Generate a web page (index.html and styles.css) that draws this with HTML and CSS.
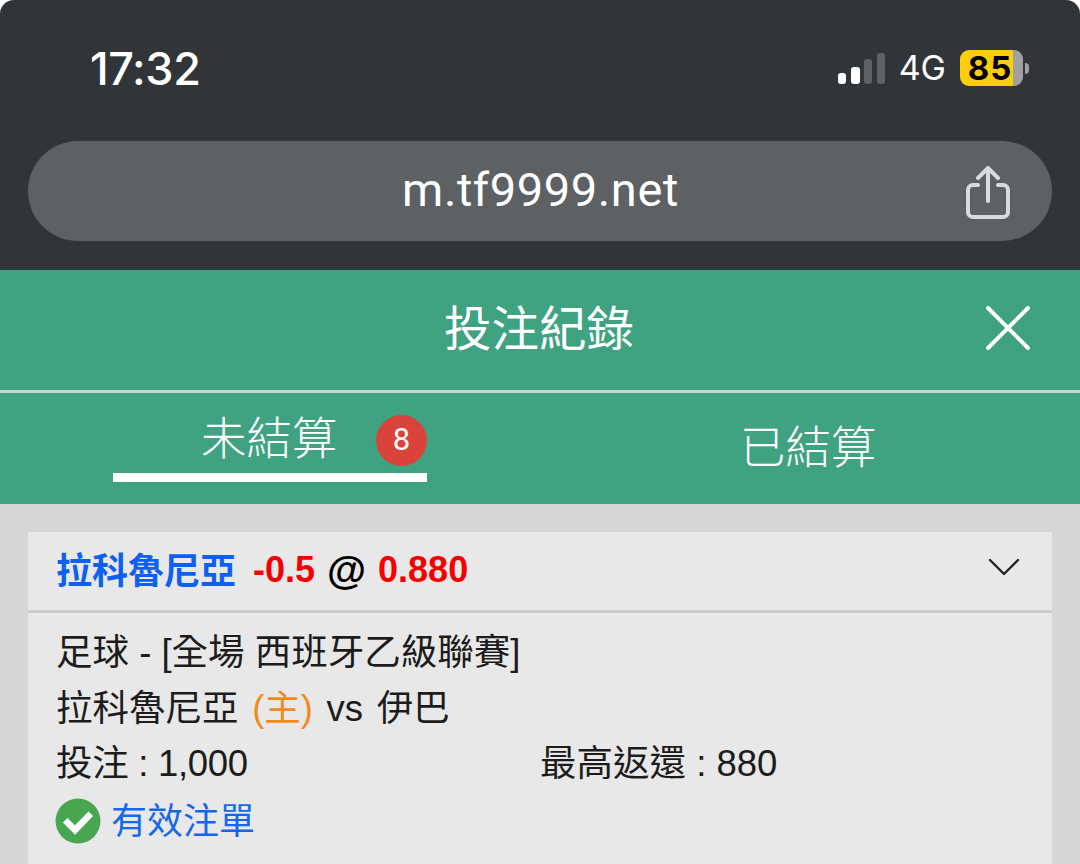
FILE: index.html
```html
<!DOCTYPE html>
<html lang="zh-Hant">
<head>
<meta charset="utf-8">
<title>投注紀錄</title>
<link rel="stylesheet" href="styles.css">
</head>
<body>
<div class="page">
  <header class="browser">
    <div class="status">
      <span class="time">17:32</span>
      <div class="indicators">
        <svg class="signal" width="47" height="31" viewBox="0 0 47 31">
          <rect x="0" y="20" width="8" height="11" rx="3" fill="#fff"/>
          <rect x="13" y="14" width="9" height="17" rx="3" fill="#fff"/>
          <rect x="26" y="6" width="8" height="25" rx="3" fill="#5f6265"/>
          <rect x="39" y="0" width="8" height="31" rx="3" fill="#5f6265"/>
        </svg>
        <span class="net">4G</span>
        <div class="battery">
          <div class="cell"><span>85</span></div>
          <i class="nub"></i>
        </div>
      </div>
    </div>
    <div class="urlbar">
      <span class="url">m.tf9999.net</span>
      <svg class="share" width="46" height="54" viewBox="0 0 46 54" fill="none" stroke="#d8dade" stroke-width="4" stroke-linecap="round" stroke-linejoin="round">
        <path d="M13 19H8a5 5 0 0 0-5 5v22a5 5 0 0 0 5 5h30a5 5 0 0 0 5-5V24a5 5 0 0 0-5-5h-5"/>
        <path d="M23 35V3"/>
        <path d="M13 12 23 2l10 10"/>
      </svg>
    </div>
  </header>
  <section class="title">
    <h1>投注紀錄</h1>
    <svg class="close" width="44" height="44" viewBox="0 0 44 44" stroke="#fff" stroke-width="4" stroke-linecap="round"><path d="M2 2 42 42M42 2 2 42"/></svg>
  </section>
  <nav class="tabs">
    <div class="tab active">
      <span class="tab-label">未結算</span>
      <span class="badge">8</span>
    </div>
    <div class="tab other"><span class="tab-label">已結算</span></div>
  </nav>
  <main class="content">
    <article class="card">
      <div class="card-head">
        <div class="bet">
          <span class="team">拉科魯尼亞</span>
          <span class="odds">-0.5</span>
          <span class="at">@</span>
          <span class="odds">0.880</span>
        </div>
        <svg class="chev" width="32" height="20" viewBox="0 0 32 20" fill="none" stroke="#222" stroke-width="2.4" stroke-linecap="round" stroke-linejoin="round"><path d="M2 3 16 17 30 3"/></svg>
      </div>
      <div class="card-body">
        <div class="row">足球 - [全場 西班牙乙級聯賽]</div>
        <div class="row match">拉科魯尼亞 <span class="home">(主)</span> vs 伊巴</div>
        <div class="row split"><span class="col">投注 : 1,000</span><span class="col">最高返還 : 880</span></div>
        <div class="row valid">
          <svg width="46" height="46" viewBox="0 0 46 46"><circle cx="23" cy="23" r="22.5" fill="#47a64f"/><path d="M12.5 24.5 20 32 33.5 18" fill="none" stroke="#fff" stroke-width="6.5" stroke-linecap="square" stroke-linejoin="miter"/></svg>
          <span>有效注單</span>
        </div>
      </div>
    </article>
  </main>
</div>
</body>
</html>
```
FILE: styles.css
```css
* { box-sizing: border-box; }
html, body { margin: 0; padding: 0; background: #fff; }
body { width: 1080px; height: 864px; overflow: hidden; font-family: "Liberation Sans", "Noto Sans CJK TC", sans-serif; }
.page { width: 1080px; height: 864px; display: flex; flex-direction: column; overflow: hidden; border-radius: 14px 14px 0 0; }
.browser { height: 270px; background: #323538; border-bottom: 1px solid #23403a; padding: 0 28px; flex: none; }
.status { height: 141px; display: flex; justify-content: space-between; align-items: flex-start; padding: 0 23px 0 62px; }
.time { margin-top: 44px; font: 500 45px/50px Inter, "Liberation Sans", sans-serif; letter-spacing: -0.4px; color: #fff; }
.indicators { display: flex; align-items: center; margin-top: 50px; height: 36px; }
.signal { margin-top: 1px; }
.net { margin-left: 14px; font: 400 34px/36px Inter, "Liberation Sans", sans-serif; color: #fff; }
.battery { display: flex; align-items: center; margin-left: 14px; }
.cell { width: 63px; height: 36px; border-radius: 9px; background: linear-gradient(90deg, #fdcd0d 0 53px, #a0a0a2 53px); display: flex; align-items: center; }
.cell span { width: 53px; padding-left: 7px; text-align: center; font: 700 33px/36px Inter, "Liberation Sans", sans-serif; color: #000; letter-spacing: 1px; }
.nub { width: 4px; height: 11px; margin-left: 2px; background: #a0a0a2; border-radius: 0 5px 5px 0; }
.urlbar { height: 100px; background: #5d6164; border-radius: 50px; display: flex; align-items: center; justify-content: center; position: relative; }
.url { font: 400 47px/56px Roboto, "Liberation Sans", sans-serif; color: #fff; letter-spacing: 0.6px; margin-left: 1px; margin-top: -3px; }
.share { position: absolute; right: 41px; top: 25px; }
.title { height: 123px; background: #3fa280; border-bottom: 3px solid #c9d6d0; padding-bottom: 8px; display: flex; align-items: center; justify-content: center; position: relative; flex: none; }
.title h1 { margin: 0 0 0 -2px; font: 400 47.5px/60px "Noto Sans CJK TC", sans-serif; color: #fff; }
.close { position: absolute; right: 50px; top: 36px; }
.tabs { height: 111px; background: #3fa280; display: flex; padding-left: 113px; flex: none; }
.tab { position: relative; }
.tab-label { font: 300 45.4px/60px "Noto Sans CJK TC", sans-serif; color: #fff; }
.tab.active { width: 314px; height: 89px; border-bottom: 9px solid #fff; padding: 12px 0 0 88px; display: block; }
.tab.active .tab-label { display: block; width: 140px; }
.badge { position: absolute; right: 0; top: 22px; width: 51px; height: 51px; border-radius: 50%; background: #d9433b; color: #fff; font: 400 31px/50px Roboto, "Liberation Sans", sans-serif; text-align: center; }
.tab.other { margin-left: 313px; padding-top: 21px; }
.content { flex: 1; background: #d6d6d6; padding: 28px 28px 0; min-height: 0; }
.card { background: #e8e8e8; height: 100%; }
.card-head { height: 81px; border-bottom: 3px solid #cbcbcb; display: flex; align-items: center; justify-content: space-between; padding: 0 32px 0 28px; }
.bet { display: flex; align-items: center; font-weight: 700; font-size: 36px; line-height: 50px; margin-top: -2px; }
.team { color: #0f5ff0; font-family: "Noto Sans CJK TC", sans-serif; font-weight: 700; font-size: 36px; margin-bottom: 4px; }
.odds { color: #f40000; margin-left: 17px; }
.at { color: #000; margin-left: 12px; font-size: 40px; }
.at + .odds { margin-left: 12px; }
.chev { margin-top: -8px; }
.card-body { padding: 12px 29px 0 28px; color: #1c1c1c; font-size: 36.5px; }
.row { height: 55.5px; line-height: 55px; white-space: nowrap; font-family: "Liberation Sans", "Noto Sans CJK TC", sans-serif; }
.match { word-spacing: 3.5px; }
.home { color: #f28b1e; }
.split { display: flex; }
.col:first-child { width: 484px; letter-spacing: -0.3px; }
.valid { display: flex; align-items: center; margin-left: -1px; color: #1668ea; margin-top: 2px; font-size: 36px; }
.valid span { margin-left: 10px; }
```
